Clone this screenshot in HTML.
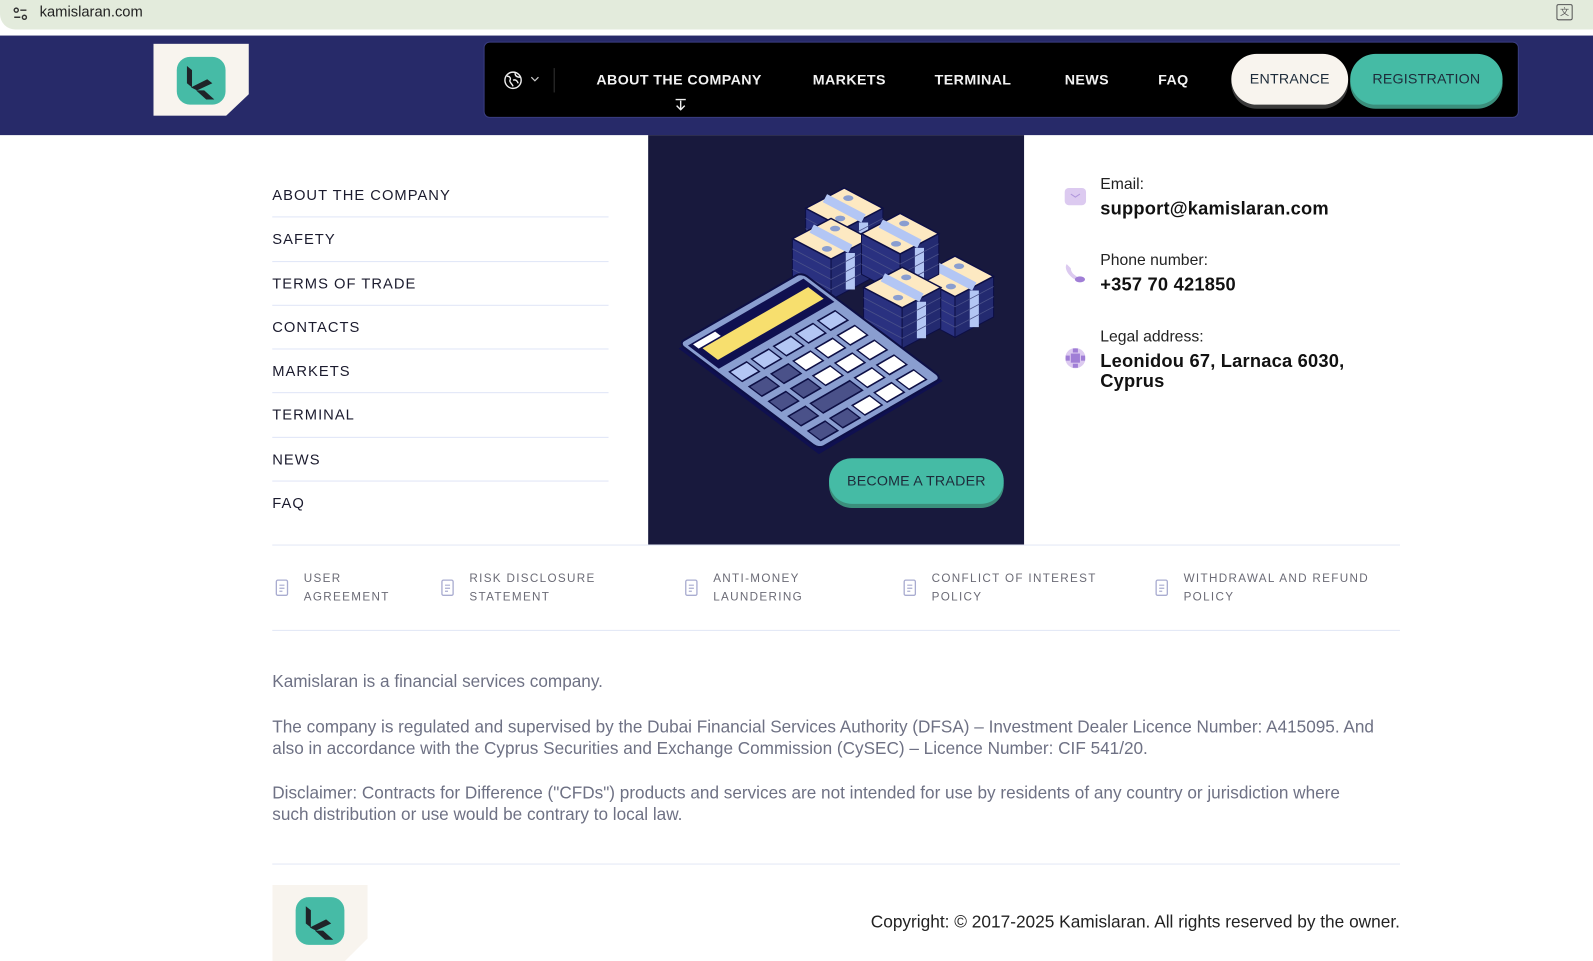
<!DOCTYPE html>
<html><head><meta charset="utf-8"><style>
*{margin:0;padding:0;box-sizing:border-box}
body{width:1593px;height:961px;overflow:hidden;background:#fff;font-family:"Liberation Sans",sans-serif;color:#1b1b2e}
#w{position:absolute;left:0;top:0;width:1568px;height:946px;transform:scale(1.01594);transform-origin:0 0}
.abs{position:absolute}
.bar{left:0;top:0;width:1568px;height:35px;background:#fff}
.bar .pill{position:absolute;left:0;top:0;width:1568px;height:29px;background:#e3ebdc;border-radius:0 0 0 15px}
.hdr{left:0;top:35px;width:1568px;height:98px;background:#272a69}
.logo{background:#f8f4ee;clip-path:polygon(0 0,100% 0,100% 70%,76% 100%,0 100%)}
.nav{left:476px;top:41px;width:1019px;height:75px;background:#000;border-radius:6px;border:1px solid #3a3d80}
.nav .it{position:absolute;top:28px;color:#f2f2f2;font-size:14px;font-weight:bold;letter-spacing:.4px}
.btn{position:absolute;border-radius:26px;font-size:14px;text-align:center;letter-spacing:.2px;color:#1d2b3a}
.side a{display:block;height:43.3px;border-bottom:1px solid #dfe5f7;font-size:14.5px;letter-spacing:1px;color:#1b1b2e;padding-top:14px;text-decoration:none}
.side a:last-child{border-bottom:none}
.lbl{font-size:15.5px;color:#222}
.val{font-size:18px;font-weight:bold;color:#111;letter-spacing:.2px}
.doc{position:absolute;top:561px;font-size:11.5px;letter-spacing:1.3px;color:#6b6b76;line-height:18px}
.doc svg{position:absolute;left:-28px;top:9px}
.p{position:absolute;left:268px;width:1110px;font-size:16.9px;color:#6e7184;line-height:21px;white-space:nowrap}
</style></head><body><div id="w">
<div class="abs bar"><div class="pill"></div>
<svg class="abs" style="left:12px;top:6px" width="16" height="16" viewBox="0 0 16 16"><circle cx="4" cy="4" r="2" fill="none" stroke="#333" stroke-width="1.4"/><line x1="8" y1="4" x2="14" y2="4" stroke="#333" stroke-width="1.4"/><circle cx="12" cy="11" r="2" fill="none" stroke="#333" stroke-width="1.4"/><line x1="2" y1="11" x2="8" y2="11" stroke="#333" stroke-width="1.4"/></svg>
<div class="abs" style="left:39px;top:4px;font-size:14.5px;color:#222">kamislaran.com</div>
<div class="abs" style="left:1532px;top:4px;width:16px;height:16px;border:1.5px solid #555;border-radius:2px;font-size:9px;text-align:center;color:#555">文</div>
</div>
<div class="abs hdr"></div>
<div class="abs logo" style="left:151px;top:43px;width:94px;height:71px"></div>
<div class="abs" style="left:174px;top:56px;width:48px;height:47px;background:#46bba6;border-radius:13px"></div>
<svg class="abs" style="left:174px;top:56px" width="48" height="47" viewBox="0 0 48 47"><polygon points="10,9 15,13 15,30 10,26" fill="#1f2328"/><polygon points="14,30 30,22 35,26 20,33" fill="#1f2328"/><polygon points="19,33 27,33 37,42 29,42" fill="#1f2328"/></svg>
<div class="abs nav">
<svg class="abs" style="left:18px;top:27px" width="20" height="20" viewBox="0 0 20 20" fill="none" stroke="#eee" stroke-width="1.4"><circle cx="10" cy="10" r="8"/><path d="M4 6c3 0 4 2 3 4s2 3 3 6M12 3c0 3 2 4 5 4M10 10c2-1 4 0 5 3"/></svg>
<svg class="abs" style="left:45px;top:33px" width="9" height="6" viewBox="0 0 9 6"><path d="M1 1l3.5 3.5L8 1" stroke="#ccc" fill="none" stroke-width="1.2"/></svg>
<div class="abs" style="left:68px;top:25px;width:1px;height:24px;background:#333"></div>
<div class="it" style="left:110px">ABOUT THE COMPANY</div>
<svg class="abs" style="left:186px;top:55px" width="14" height="12" viewBox="0 0 14 12"><path d="M2 1h10M7 2v9M3 7l4 4 4-4" stroke="#eee" fill="none" stroke-width="1.4"/></svg>
<div class="it" style="left:323px">MARKETS</div>
<div class="it" style="left:443px">TERMINAL</div>
<div class="it" style="left:571px">NEWS</div>
<div class="it" style="left:663px">FAQ</div>
<div class="btn" style="left:735px;top:11px;width:115px;height:50px;background:#f8f4ee;box-shadow:0 4px 0 #3a3a3a;padding-top:16px">ENTRANCE</div>
<div class="btn" style="left:852px;top:11px;width:150px;height:50px;background:#45bba5;box-shadow:0 4px 0 #3b8f7c;padding-top:16px">REGISTRATION</div>
</div>
<div class="abs side" style="left:268px;top:171px;width:331px">
<a>ABOUT THE COMPANY</a><a>SAFETY</a><a>TERMS OF TRADE</a><a>CONTACTS</a><a>MARKETS</a><a>TERMINAL</a><a>NEWS</a><a>FAQ</a>
</div>
<div class="abs" style="left:638px;top:133px;width:370px;height:403px;background:#18193d"></div>
<svg class="abs" style="left:638px;top:133px" width="370" height="403" viewBox="0 0 370 403">
<defs>
<g id="bx">
<polygon points="-38,0 0,20 0,60 -38,40" fill="#2a3180" stroke="#0d0f45"/>
<polygon points="0,20 38,0 38,40 0,60" fill="#232a70" stroke="#0d0f45"/>
<polygon points="-38,0 0,-20 38,0 0,20" fill="#fde9c2" stroke="#0d0f45" stroke-width="1.5"/>
<line x1="-19" y1="-10" x2="19" y2="10" stroke="#b3c6f4" stroke-width="9"/>
<line x1="19" y1="14" x2="19" y2="50" stroke="#b3c6f4" stroke-width="9"/>
<ellipse cx="4" cy="-10" rx="5" ry="2.8" fill="#8a9ed0"/>
<ellipse cx="-4" cy="10" rx="5" ry="2.8" fill="#8a9ed0"/>
<g stroke="#4a5189" stroke-width=".8"><line x1="-38" y1="10" x2="0" y2="30"/><line x1="-38" y1="20" x2="0" y2="40"/><line x1="-38" y1="30" x2="0" y2="50"/><line x1="0" y1="30" x2="38" y2="10"/><line x1="0" y1="40" x2="38" y2="20"/><line x1="0" y1="50" x2="38" y2="30"/></g>
</g>
</defs>
<g transform="translate(-20,2)">
<use href="#bx" x="213" y="70"/>
<use href="#bx" x="200" y="100"/>
<use href="#bx" x="322" y="137"/>
<use href="#bx" x="268" y="95"/>
<use href="#bx" x="270" y="148"/>
</g>
<g transform="translate(-12,-8)">
<polygon points="42,218 163,148 302,250 180,322" fill="#0f1050"/>
<g transform="matrix(1.21,-0.70,1.38,1.04,42,213)">
<rect x="0" y="0" width="100" height="100" rx="4" fill="#8a9ed0" stroke="#0d0f45" stroke-width="2" vector-effect="non-scaling-stroke"/>
<rect x="3" y="4" width="94" height="22" fill="#0f1050"/>
<rect x="8" y="10" width="86" height="11" fill="#f7df6e"/>
<rect x="6" y="5" width="18" height="4" fill="#fff"/>
<g stroke="#0d0f45" stroke-width="1" vector-effect="non-scaling-stroke">
<rect x="6" y="31" width="14" height="9" fill="#b3c6f4"/><rect x="24" y="31" width="14" height="9" fill="#b3c6f4"/><rect x="42" y="31" width="14" height="9" fill="#b3c6f4"/><rect x="60" y="31" width="14" height="9" fill="#b3c6f4"/><rect x="78" y="31" width="14" height="9" fill="#b3c6f4"/>
<rect x="6" y="45" width="14" height="9" fill="#4a5189"/><rect x="24" y="45" width="14" height="9" fill="#4a5189"/><rect x="42" y="45" width="14" height="9" fill="#fff"/><rect x="60" y="45" width="14" height="9" fill="#fff"/><rect x="78" y="45" width="14" height="9" fill="#fff"/>
<rect x="6" y="59" width="14" height="9" fill="#4a5189"/><rect x="24" y="59" width="14" height="9" fill="#4a5189"/><rect x="42" y="59" width="14" height="9" fill="#fff"/><rect x="60" y="59" width="14" height="9" fill="#fff"/><rect x="78" y="59" width="14" height="9" fill="#fff"/>
<rect x="6" y="73" width="14" height="9" fill="#4a5189"/><rect x="24" y="73" width="32" height="9" fill="#4a5189"/><rect x="60" y="73" width="14" height="9" fill="#fff"/><rect x="78" y="73" width="14" height="9" fill="#fff"/>
<rect x="6" y="87" width="14" height="9" fill="#4a5189"/><rect x="24" y="87" width="14" height="9" fill="#4a5189"/><rect x="42" y="87" width="14" height="9" fill="#fff"/><rect x="60" y="87" width="14" height="9" fill="#fff"/><rect x="78" y="87" width="14" height="9" fill="#fff"/>
</g></g></g>
</svg>
<div class="btn" style="left:816px;top:451px;width:172px;height:45px;background:#45bba5;box-shadow:0 4px 0 #3b8f7c;padding-top:14px">BECOME A TRADER</div>
<div class="abs" style="left:1048px;top:185px;width:21px;height:17px;background:#dccaf0;border-radius:4px"></div>
<svg class="abs" style="left:1053px;top:190px" width="11" height="6"><path d="M1 1l4.5 3L10 1" stroke="#b197dc" fill="none"/></svg>
<div class="abs lbl" style="left:1083px;top:173px">Email:</div>
<div class="abs val" style="left:1083px;top:195px">support@kamislaran.com</div>
<svg class="abs" style="left:1047px;top:258px" width="22" height="22" viewBox="0 0 22 22"><path d="M3 2c-3 4 2 12 8 15l2-3c-4-2-6-5-6-8z" fill="#dccaf0"/><ellipse cx="16" cy="17" rx="5" ry="3" fill="#a07ed6"/></svg>
<div class="abs lbl" style="left:1083px;top:248px">Phone number:</div>
<div class="abs val" style="left:1083px;top:270px">+357 70 421850</div>
<svg class="abs" style="left:1048px;top:342px" width="21" height="21" viewBox="0 0 21 21"><circle cx="10.5" cy="10.5" r="10" fill="#dccaf0"/><rect x="6" y="6" width="9" height="9" fill="#a07ed6"/><rect x="1" y="8" width="4" height="5" fill="#a07ed6"/><rect x="16" y="8" width="4" height="5" fill="#a07ed6"/><rect x="8" y="1" width="5" height="4" fill="#a07ed6"/><rect x="8" y="16" width="5" height="4" fill="#a07ed6"/></svg>
<div class="abs lbl" style="left:1083px;top:323px">Legal address:</div>
<div class="abs val" style="left:1083px;top:345px;line-height:20px">Leonidou 67, Larnaca 6030,<br>Cyprus</div>
<div class="abs" style="left:268px;top:536px;width:1110px;height:1px;background:#e2e7f5"></div>
<div class="abs" style="left:268px;top:620px;width:1110px;height:1px;background:#e2e7f5"></div>
<div class="doc" style="left:299px">USER<br>AGREEMENT<svg width="13" height="17" viewBox="0 0 13 17"><rect x="1" y="1" width="11" height="15" rx="1.5" fill="none" stroke="#a9acd0" stroke-width="1.3"/><path d="M4 6h5M4 9h5M4 12h3" stroke="#a9acd0" stroke-width="1.2"/></svg></div>
<div class="doc" style="left:462px">RISK DISCLOSURE<br>STATEMENT<svg width="13" height="17" viewBox="0 0 13 17"><rect x="1" y="1" width="11" height="15" rx="1.5" fill="none" stroke="#a9acd0" stroke-width="1.3"/><path d="M4 6h5M4 9h5M4 12h3" stroke="#a9acd0" stroke-width="1.2"/></svg></div>
<div class="doc" style="left:702px">ANTI-MONEY<br>LAUNDERING<svg width="13" height="17" viewBox="0 0 13 17"><rect x="1" y="1" width="11" height="15" rx="1.5" fill="none" stroke="#a9acd0" stroke-width="1.3"/><path d="M4 6h5M4 9h5M4 12h3" stroke="#a9acd0" stroke-width="1.2"/></svg></div>
<div class="doc" style="left:917px">CONFLICT OF INTEREST<br>POLICY<svg width="13" height="17" viewBox="0 0 13 17"><rect x="1" y="1" width="11" height="15" rx="1.5" fill="none" stroke="#a9acd0" stroke-width="1.3"/><path d="M4 6h5M4 9h5M4 12h3" stroke="#a9acd0" stroke-width="1.2"/></svg></div>
<div class="doc" style="left:1165px">WITHDRAWAL AND REFUND<br>POLICY<svg width="13" height="17" viewBox="0 0 13 17"><rect x="1" y="1" width="11" height="15" rx="1.5" fill="none" stroke="#a9acd0" stroke-width="1.3"/><path d="M4 6h5M4 9h5M4 12h3" stroke="#a9acd0" stroke-width="1.2"/></svg></div>
<div class="p" style="top:660px">Kamislaran is a financial services company.</div>
<div class="p" style="top:705px">The company is regulated and supervised by the Dubai Financial Services Authority (DFSA) – Investment Dealer Licence Number: A415095. And<br>also in accordance with the Cyprus Securities and Exchange Commission (CySEC) – Licence Number: CIF 541/20.</div>
<div class="p" style="top:770px">Disclaimer: Contracts for Difference ("CFDs") products and services are not intended for use by residents of any country or jurisdiction where<br>such distribution or use would be contrary to local law.</div>
<div class="abs" style="left:268px;top:850px;width:1110px;height:1px;background:#e2e7f5"></div>
<div class="abs logo" style="left:268px;top:871px;width:94px;height:75px"></div>
<div class="abs" style="left:291px;top:883px;width:48px;height:47px;background:#46bba6;border-radius:13px"></div>
<svg class="abs" style="left:291px;top:883px" width="48" height="47" viewBox="0 0 48 47"><polygon points="10,9 15,13 15,30 10,26" fill="#1f2328"/><polygon points="14,30 30,22 35,26 20,33" fill="#1f2328"/><polygon points="19,33 27,33 37,42 29,42" fill="#1f2328"/></svg>
<div class="abs" style="right:190px;top:898px;font-size:17px;color:#222;white-space:nowrap">Copyright: © 2017-2025 Kamislaran. All rights reserved by the owner.</div>
</div></body></html>
